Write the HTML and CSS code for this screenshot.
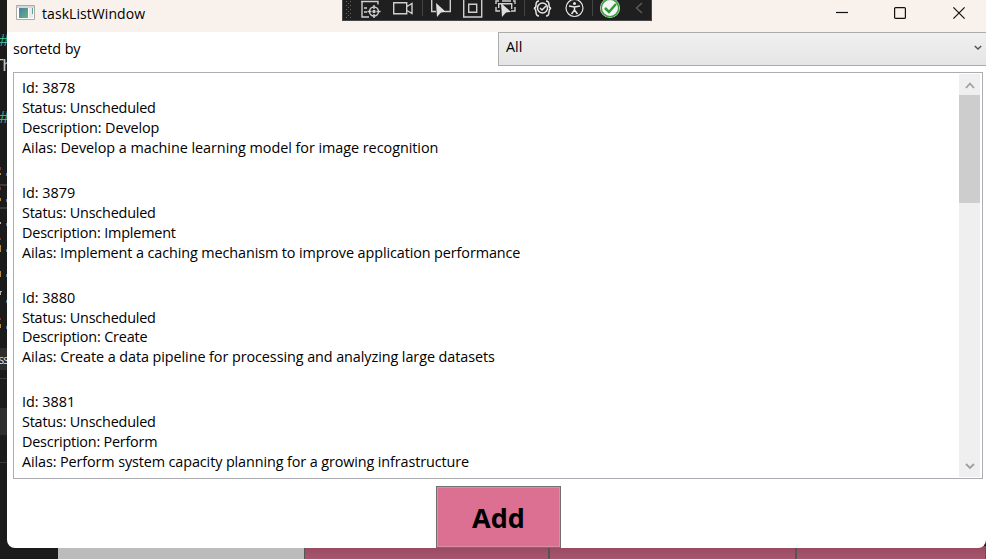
FILE: index.html
```html
<!DOCTYPE html>
<html lang="en">
<head>
<meta charset="utf-8">
<title>taskListWindow</title>
<link rel="stylesheet" href="styles.css">
</head>
<body>
<div class="desktop">
  <div class="editor">
    <span class="code teal c1">##</span><span class="code pale c2">Th</span><span class="code teal c3">##</span>
    <i class="rule r1"></i><i class="rule r2"></i><i class="rule r3"></i><i class="rule r4"></i><i class="band b1"></i><i class="band b2"></i>
    <svg class="flecks" width="7" height="260" viewBox="0 0 7 260"><g fill="#b98a42"><path d="M0 8h1v2H0zM0 33h1v3H0zM0 80h1v7H0zM0 106h1v6H0zM0 159h1v4H0z"/></g><g fill="#813a29"><path d="M0 2h1v3H0zM0 22h1v3H0zM0 73h1v2H0zM0 153h1v2H0z"/></g><g fill="#4f75a5"><path d="M6 8h1v3H6zM6 34h1v3H6zM6 58h1v3H6zM6 84h1v3H6zM6 109h1v3H6zM6 135h1v3H6zM6 161h1v3H6z"/></g><g fill="#b4b4b4"><path d="M0 57h1v2H0zM0 126h2v1H1v3H0z"/></g></svg>
    <span class="code small c4">ss</span>
  </div>
  <div class="strip"><i class="dark"></i><i class="grey"></i><i class="rose"></i><i class="rose"></i><i class="rose"></i></div>
</div>
<main class="window">
  <header class="titlebar">
    <svg class="appicon" width="19" height="16" viewBox="0 0 19 16"><defs><linearGradient id="g" x2="1" y2="1"><stop stop-color="#4b7cae"/><stop offset="1" stop-color="#63b678"/></linearGradient></defs><path fill="#fff" stroke="#aaa" d="M.5.5h18v14H.5z"/><path fill="#d8d8d8" d="M1 1h17v2H1z"/><path fill="url(#g)" d="M3 3h9v10H3z"/><path fill="#e8eaec" d="M13 3h4v10h-4z"/><path fill="#55a98b" d="M16 3h1v6h-1z"/></svg>
    <h1>taskListWindow</h1>
    <div class="controls">
      <svg width="12" height="12" viewBox="0 0 12 12"><path d="M1 5.5h12"/></svg>
      <svg width="12" height="12" viewBox="0 0 12 12"><rect x=".6" y=".6" width="10.8" height="10.8" rx="1"/></svg>
      <svg width="12" height="12" viewBox="0 0 12 12"><path d="M.4.4l11.2 11.2M11.6.4L.4 11.6"/></svg>
    </div>
  </header>
  <div class="filter"><label>sortetd by</label><div class="combo"><span>All</span><svg width="8" height="6" viewBox="0 0 8 6"><path d="M.8 1l3.2 3L7.2 1"/></svg></div></div>
  <section class="listbox">
    <div class="items">
      <div class="item"><p>Id: 3878</p><p class="status">Status: Unscheduled</p><p class="d1">Description: Develop</p><p class="l1">Ailas: Develop a machine learning model for image recognition</p></div>
      <div class="item"><p>Id: 3879</p><p class="status">Status: Unscheduled</p><p class="d2">Description: Implement</p><p class="l2">Ailas: Implement a caching mechanism to improve application performance</p></div>
      <div class="item"><p>Id: 3880</p><p class="status">Status: Unscheduled</p><p class="d2">Description: Create</p><p class="l3">Ailas: Create a data pipeline for processing and analyzing large datasets</p></div>
      <div class="item"><p>Id: 3881</p><p class="status">Status: Unscheduled</p><p class="d3">Description: Perform</p><p class="l4">Ailas: Perform system capacity planning for a growing infrastructure</p></div>
    </div>
    <div class="scroll"><svg width="21" height="21" viewBox="0 0 21 21"><path d="M7 14l4-4.5 4 4.5"/></svg><i class="thumb"></i><svg class="down" width="21" height="21" viewBox="0 0 21 21"><path d="M7 8l4 4 4-4"/></svg></div>
  </section>
  <button class="add">Add</button>
</main>
<svg class="debugbar" width="310" height="21" viewBox="0 0 310 21">
  <path fill="#1f1f1f" d="M0 0h310v21H0z"/><path d="M0 20.5h309.5V0M.5 0v20" fill="none" stroke="#48484a"/>
  <g fill="#666"><path d="M4 1h1v1H4zM8 1h1v1H8zM6 3h1v1H6zM4 5h1v1H4zM8 5h1v1H8zM6 7h1v1H6zM4 9h1v1H4zM8 9h1v1H8zM6 11h1v1H6zM4 13h1v1H4zM8 13h1v1H8zM6 15h1v1H6zM4 17h1v1H4zM8 17h1v1H8z"/></g>
  <path d="M80.5 0v16M182.500 0v16M250.500 0v16" stroke="#444"/>
  <g fill="none" stroke="#cfcfcf" stroke-width="1.4">
    <path d="M19 1.500h17v3M20 1v16H27M22 8h3M22 12h3"/><circle cx="32" cy="11.500" r="4.500"/><path d="M32 5v4M32 14v4M25.500 11.500h4M34.500 11.500h4"/><circle cx="32" cy="11.500" r="1" fill="#cfcfcf"/>
    <path d="M51.700 2.700h13v11h-13zM65 6.500l5-3v10l-5-3"/>
    <path d="M89.700 0v11.500H94M103 11.500h5.300V0"/>
    <path d="M121.700 0v17h18V0M126.700 4.200h8v8h-8z"/>
    <path d="M158 11h-4V7M154 4V1h3M160 1h9M171 1h2v3M173 7v4h-4M156.700 8V3.700h13V9"/>
  </g>
  <g fill="#dedede"><path d="M94 3l10 9-5 .6-4 4.400zM159 3l10 9-5 .6-4 4.400z"/></g>
  <g fill="none" stroke="#e6e6e6" stroke-width="1.500"><path d="M197 1q-3 0-3 4 0 3-2 3 2 1 2 4 0 4 3 4M204 1q3 0 3 4 0 3 2 3-2 1-2 4 0 4-3 4"/><circle cx="200.500" cy="8" r="5"/><path d="M198 8l2 2 4-4"/><circle cx="232.500" cy="8" r="8.500" stroke-width="1.200"/><path d="M227 6l5.500 1 5.500-1M232.500 7v3l-3 4M232.500 10l3 4"/></g><circle cx="232.500" cy="3.500" r="1.500" fill="#e6e6e6"/>
  <circle cx="268" cy="8" r="10" fill="#eee"/><circle cx="268" cy="8" r="8.700" fill="#f4f4f4" stroke="#38a03c" stroke-width="1.500"/><path d="M263 8l4 4 7-8" fill="none" stroke="#319a36" stroke-width="2.500"/>
  <path d="M300 3l-5.500 5 5.500 5" fill="none" stroke="#606060" stroke-width="1.300"/>
</svg>
</body>
</html>
```
FILE: styles.css
```css
* { box-sizing: border-box; }
body { margin: 0; width: 986px; height: 559px; overflow: hidden; position: relative; background: #1b1b1b; color: #000; font: 14.4px/20px "Open Sans", "Noto Sans", sans-serif; }
p, h1 { margin: 0; }
svg { display: block; flex: none; }
.desktop { position: absolute; inset: 0; display: flex; flex-direction: column; justify-content: space-between; }
.editor { position: relative; width: 7px; height: 548px; overflow: hidden; }
.code { position: absolute; font: 17px/20px "Liberation Sans", sans-serif; letter-spacing: -1px; right: -1px; }
.teal { color: #3eb596; }
.pale { color: #c8c8c8; right: -4px; }
.small { font: 12px/14px "Open Sans", sans-serif; color: #ddd; }
.c1 { top: 31px; } .c2 { top: 56px; } .c3 { top: 108px; } .c4 { top: 353px; }
.rule { position: absolute; left: 0; width: 7px; height: 2px; background: #3a3a3a; }
.r1 { top: 184px; } .r2 { top: 207px; } .r3 { top: 378px; height: 1px; } .r4 { top: 462px; height: 1px; }
.band { position: absolute; left: 0; width: 7px; background: #2e2e2e; }
.b1 { top: 348px; height: 22px; } .b2 { top: 408px; height: 27px; }
.flecks { position: absolute; left: 0; top: 165px; }
.strip { height: 13px; display: grid; grid-template-columns: 58px 246px 245px 247px 1fr; }
.strip .grey { background: #bcbcbc; }
.strip .rose { background: linear-gradient(#96495f, #a8566f); border-left: 1px solid #555; border-right: 1px solid #555; }
.window { position: relative; display: flex; flex-direction: column; width: 979px; height: 548px; margin-left: 7px; background: #fff; border-radius: 0 0 8px 8px; overflow: hidden; }
.titlebar { height: 32px; flex: none; display: flex; background: #f9f1ec; padding: 5px 21px 0 9px; }
.titlebar h1 { font-size: 14px; line-height: 18px; font-weight: 400; letter-spacing: .07px; margin-left: 7px; width: 104px; white-space: nowrap; }
.controls { margin-left: auto; display: flex; gap: 47px; padding-top: 2px; fill: none; stroke: #111; stroke-width: 1.2; }
.controls svg { overflow: visible; }
.filter { display: flex; height: 34px; flex: none; }
.filter label { width: 491px; padding: 7px 0 0 6px; letter-spacing: -.08px; }
.combo { flex: 1; display: flex; justify-content: space-between; border: 1px solid #acacac; border-right: 0; background: linear-gradient(#f0f0f0, #e5e5e5); padding: 4px 4px 0 7px; }
.combo svg { margin-top: 8px; fill: none; stroke: #555; stroke-width: 1.5; }
.listbox { display: flex; justify-content: space-between; height: 407px; width: 970px; flex: none; margin: 6px 0 0 6px; border: 1px solid #abadb3; padding: 1px 2px 1px 8px; }
.items { padding-top: 4px; }
.item { height: 104.8px; white-space: nowrap; }
.item p { line-height: 19.95px; height: 19.95px; }
.status { letter-spacing: -.2px; }
.d1 { letter-spacing: -.1px; }
.d2 { letter-spacing: -.17px; }
.d3 { letter-spacing: -.22px; }
.l1 { letter-spacing: -.04px; }
.l2 { letter-spacing: -.1px; }
.l3 { letter-spacing: -.075px; }
.l4 { letter-spacing: -.11px; }
.scroll { width: 21px; background: #efefef; display: flex; flex-direction: column; fill: none; stroke: #a0a0a0; stroke-width: 1.8; }
.thumb { height: 108px; background: #cdcdcd; }
.down { margin-top: auto; }
.add { align-self: center; width: 125px; height: 62px; margin: 7px 0 0 4px; padding: 2px 0 0; background: #db7093; border: 1px solid #707070; box-shadow: inset 0 0 0 1px #dc8ca6; font: 700 27px/36px "Open Sans", sans-serif; color: #000; }
.debugbar { position: absolute; left: 342px; top: 0; }
```
